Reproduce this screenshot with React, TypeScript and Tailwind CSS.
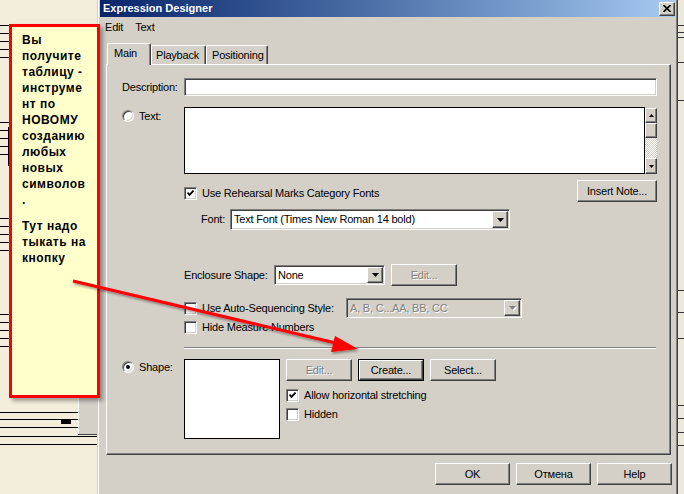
import React from "react";

const raised =
  "bg-[#d4d0c8] border border-t-white border-l-white border-b-[#404040] border-r-[#404040] shadow-[inset_-1px_-1px_0_#808080]";
const sunken =
  "border border-t-[#808080] border-l-[#808080] border-b-white border-r-white shadow-[inset_1px_1px_0_#404040,inset_-1px_-1px_0_#d4d0c8]";
const disabledText = "text-[#808080] [text-shadow:1px_1px_0_#ffffff]";

function Tri({ gray, small, up }: { gray?: boolean; small?: boolean; up?: boolean }) {
  const w = small ? 5 : 7;
  const h = small ? 3 : 4;
  const d = up ? `M0 ${h}H${w}L${w / 2} 0Z` : `M0 0H${w}L${w / 2} ${h}Z`;
  return (
    <svg width={w} height={h} viewBox={`0 0 ${w} ${h}`} className={gray ? "[filter:drop-shadow(1px_1px_0_#fff)]" : ""}>
      <path d={d} fill={gray ? "#808080" : "#000"} />
    </svg>
  );
}

function Check({ checked }: { checked?: boolean }) {
  return (
    <div className={`w-[13px] h-[13px] shrink-0 bg-white ${sunken} flex items-center justify-center`}>
      {checked && (
        <svg width="7" height="7" viewBox="0 0 7 7">
          <path d="M0.5 2.5 L2.5 4.8 L6.6 0.6" stroke="#000" strokeWidth="1.9" fill="none" />
        </svg>
      )}
    </div>
  );
}

function Radio({ selected }: { selected?: boolean }) {
  return (
    <div
      className={`w-[12px] h-[12px] shrink-0 rounded-full bg-white border border-t-[#808080] border-l-[#808080] border-b-white border-r-white shadow-[inset_1px_1px_0_#404040,inset_-1px_-1px_0_#d4d0c8] flex items-center justify-center`}
    >
      {selected && <div className="w-[4px] h-[4px] rounded-full bg-black" />}
    </div>
  );
}

function Btn({ cls, children, disabled }: { cls: string; children: React.ReactNode; disabled?: boolean }) {
  return (
    <div className={`${cls} h-[22px] shrink-0 ${raised} flex items-center justify-center`}>
      <span className={disabled ? disabledText : ""}>{children}</span>
    </div>
  );
}

function Select({ cls, text, disabled }: { cls: string; text: string; disabled?: boolean }) {
  return (
    <div
      className={`${cls} shrink-0 ${sunken} ${disabled ? "bg-[#d4d0c8]" : "bg-white"} flex items-center justify-between p-[1px]`}
    >
      <span className={`pl-[2px] whitespace-nowrap ${disabled ? disabledText : ""}`}>{text}</span>
      <div className={`w-[16px] h-full ${raised} flex items-center justify-center`}>
        <Tri gray={disabled} />
      </div>
    </div>
  );
}

function Scrollbar() {
  return (
    <div className="w-[12px] h-[66px] mt-[1px] flex flex-col">
      <div className={`h-[15px] ${raised} flex items-center justify-center`}>
        <Tri small up />
      </div>
      <div className={`h-[15px] ${raised}`} />
      <div className="flex-1 bg-[image:repeating-conic-gradient(#ffffff_0_25%,#d4d0c8_0_50%)] bg-[length:2px_2px]" />
      <div className={`h-[16px] ${raised} flex items-center justify-center`}>
        <Tri small />
      </div>
    </div>
  );
}

function LeftBackground() {
  const groups = [25, 122, 218, 314];
  return (
    <svg width="97" height="494" className="block shrink-0">
      <rect x="0" y="0" width="97" height="494" fill="#f3eedb" />
      {groups.map((g) =>
        [0, 1, 2, 3, 4].map((i) => (
          <line key={`${g}-${i}`} x1="0" x2="40" y1={g + i * 8 + 0.5} y2={g + i * 8 + 0.5} stroke="#000" strokeWidth="1" />
        ))
      )}
      <line x1="8.5" x2="8.5" y1="127" y2="166" stroke="#000" strokeWidth="1" />
      <rect x="78" y="370" width="19" height="65" fill="#d4d0c8" />
      <line x1="78.5" x2="78.5" y1="370" y2="434" stroke="#ffffff" />
      <line x1="78" x2="97" y1="434.5" y2="434.5" stroke="#404040" />
      {[412, 419, 427].map((y) => (
        <line key={y} x1="0" x2="78" y1={y + 0.5} y2={y + 0.5} stroke="#000" />
      ))}
      {[436, 444].map((y) => (
        <line key={y} x1="0" x2="97" y1={y + 0.5} y2={y + 0.5} stroke="#000" />
      ))}
      <rect x="61" y="420" width="10" height="4" fill="#000" />
    </svg>
  );
}

function RightBackground() {
  return (
    <svg width="6" height="494" className="block shrink-0">
      <rect x="0" y="0" width="6" height="494" fill="#ece8da" />
      {[25, 32, 37, 62, 100, 290, 312, 338, 405, 418, 432, 445].map((y) => (
        <line key={y} x1="0" x2="6" y1={y + 0.5} y2={y + 0.5} stroke="#333" />
      ))}
    </svg>
  );
}

export default function App() {
  return (
    <div className="relative w-[684px] h-[494px] overflow-hidden flex bg-[#f3eedb] font-['Liberation_Sans',Arial,sans-serif] text-[11px] leading-[13px] tracking-[-0.2px] text-black">
      <LeftBackground />

      {/* Dialog */}
      <div className="w-[581px] h-full shrink-0 border-l border-l-[#d4d0c8] border-r border-r-[#404040]">
        <div className="h-full border-l border-l-white border-r border-r-[#808080] px-[1px] bg-[#d4d0c8] flex flex-col">
          {/* title bar */}
          <div className="h-[17px] bg-linear-to-r from-[#0a246a] to-[#a6caf0] flex items-center justify-between pl-[3px]">
            <span className="text-white font-bold tracking-[0px]">Expression Designer</span>
            <div className={`w-[16px] h-[14px] ${raised} flex items-center justify-center`}>
              <svg width="8" height="7" viewBox="0 0 8 7">
                <path d="M0.5 0 L7.5 7 M7.5 0 L0.5 7" stroke="#000" strokeWidth="1.6" />
              </svg>
            </div>
          </div>

          {/* menu */}
          <div className="h-[20px] flex items-center pl-[5px] gap-[12px]">
            <span>Edit</span>
            <span>Text</span>
          </div>

          {/* tabs */}
          <div className="mt-[6px] h-[21px] flex items-end pl-[7px]">
            <div className="relative z-10 w-[44px] h-[22px] mb-[-1px] bg-[#d4d0c8] border-t border-l border-r border-t-white border-l-white border-r-[#404040] shadow-[inset_-1px_0_0_#808080] rounded-t-[2px] pl-[6px] pt-[3px]">
              Main
            </div>
            <div className="w-[55px] h-[19px] bg-[#d4d0c8] border-t border-l border-r border-t-white border-l-white border-r-[#404040] shadow-[inset_-1px_0_0_#808080] rounded-t-[2px] pl-[4px] pt-[3px]">
              Playback
            </div>
            <div className="w-[62px] h-[19px] bg-[#d4d0c8] border-t border-l border-r border-t-white border-l-white border-r-[#404040] shadow-[inset_-1px_0_0_#808080] rounded-t-[2px] pl-[5px] pt-[3px]">
              Positioning
            </div>
          </div>

          {/* panel */}
          <div className="ml-[6px] w-[565px] h-[391px] shrink-0 border border-t-white border-l-white border-b-[#404040] border-r-[#404040] shadow-[inset_-1px_-1px_0_#808080] pt-[13px] pl-[15px] flex flex-col">
            {/* Description */}
            <div className="flex h-[18px] items-center">
              <div className="w-[62px] text-right pr-[7px]">Description:</div>
              <div className={`w-[473px] h-[18px] bg-white ${sunken}`} />
            </div>

            {/* Text */}
            <div className="flex mt-[11px] h-[67px]">
              <div className="w-[62px] flex items-start pt-[3px]">
                <Radio />
                <span className="ml-[5px]">Text:</span>
              </div>
              <div className="flex">
                <div className="w-[461px] h-[67px] bg-white border border-black" />
                <Scrollbar />
              </div>
            </div>

            {/* Use Rehearsal */}
            <div className="flex mt-[6px]">
              <div className="w-[62px]" />
              <div className="w-[473px] flex justify-between items-start">
                <div className="flex items-center mt-[7px]">
                  <Check checked />
                  <span className="ml-[5px]">Use Rehearsal Marks Category Fonts</span>
                </div>
                <Btn cls="w-[80px]">Insert Note...</Btn>
              </div>
            </div>

            {/* Font */}
            <div className="flex mt-[7px] h-[21px]">
              <div className="w-[62px]" />
              <div className="pl-[17px] flex items-center">
                <span className="w-[29px]">Font:</span>
                <Select cls="w-[280px] h-[21px]" text="Text Font (Times New Roman 14 bold)" />
              </div>
            </div>

            {/* Enclosure */}
            <div className="flex mt-[34px] h-[22px] items-center">
              <div className="w-[62px]" />
              <span className="w-[90px]">Enclosure Shape:</span>
              <Select cls="w-[111px] h-[20px]" text="None" />
              <div className="ml-[6px]">
                <Btn cls="w-[66px]" disabled>
                  Edit...
                </Btn>
              </div>
            </div>

            {/* Auto-seq */}
            <div className="flex mt-[12px] h-[20px] items-center">
              <div className="w-[62px]" />
              <div className="w-[162px] flex items-center">
                <Check />
                <span className="ml-[5px]">Use Auto-Sequencing Style:</span>
              </div>
              <Select cls="w-[176px] h-[20px]" text="A, B, C...AA, BB, CC" disabled />
            </div>

            {/* Hide */}
            <div className="flex mt-[3px] h-[13px] items-center">
              <div className="w-[62px]" />
              <Check />
              <span className="ml-[5px]">Hide Measure Numbers</span>
            </div>

            {/* separator */}
            <div className="mt-[13px] ml-[62px] w-[472px] h-[2px] border-t border-t-[#808080] border-b border-b-white" />

            {/* Shape */}
            <div className="flex mt-[10px]">
              <div className="w-[62px] flex items-start pt-[2px]">
                <Radio selected />
                <span className="ml-[5px]">Shape:</span>
              </div>
              <div className="w-[96px] h-[80px] bg-white border border-black" />
              <div className="ml-[6px] flex flex-col">
                <div className="flex gap-[6px]">
                  <Btn cls="w-[66px]" disabled>
                    Edit...
                  </Btn>
                  <div className="w-[66px] h-[22px] border border-black flex">
                    <div className={`flex-1 ${raised} flex items-center justify-center`}>Create...</div>
                  </div>
                  <Btn cls="w-[66px]">Select...</Btn>
                </div>
                <div className="flex items-center mt-[8px]">
                  <Check checked />
                  <span className="ml-[5px]">Allow horizontal stretching</span>
                </div>
                <div className="flex items-center mt-[6px]">
                  <Check />
                  <span className="ml-[5px]">Hidden</span>
                </div>
              </div>
            </div>
          </div>

          {/* bottom buttons */}
          <div className="mt-[8px] flex justify-end gap-[6px] pr-[3px]">
            <Btn cls="w-[75px]">OK</Btn>
            <Btn cls="w-[75px]">Отмена</Btn>
            <Btn cls="w-[75px]">Help</Btn>
          </div>
        </div>
      </div>

      <RightBackground />

      {/* Callout */}
      <div className="absolute left-[9px] top-[24px] w-[91px] h-[374px] bg-[#ffffcc] border-[3px] border-[#ff0000] shadow-[3px_3px_4px_rgba(0,0,0,0.35)] pl-[10px] pt-[5px] text-[12px] leading-[16px] font-bold tracking-[0.5px] text-black">
        <div>
          Вы
          <br />
          получите
          <br />
          таблицу -
          <br />
          инструме
          <br />
          нт по
          <br />
          НОВОМУ
          <br />
          созданию
          <br />
          любых
          <br />
          новых
          <br />
          символов
          <br />.
        </div>
        <div className="mt-[10px]">
          Тут надо
          <br />
          тыкать на
          <br />
          кнопку
        </div>
      </div>

      {/* Arrow */}
      <svg className="absolute left-0 top-0 pointer-events-none" width="684" height="494">
        <defs>
          <filter id="sh" x="-10%" y="-50%" width="120%" height="200%">
            <feDropShadow dx="1" dy="2" stdDeviation="1.2" floodColor="#000" floodOpacity="0.35" />
          </filter>
        </defs>
        <g filter="url(#sh)">
          <line x1="73" y1="281" x2="340" y2="344" stroke="#ff0000" strokeWidth="3" />
          <polygon points="358,349 331,352 335,336" fill="#ff0000" />
        </g>
      </svg>
    </div>
  );
}
